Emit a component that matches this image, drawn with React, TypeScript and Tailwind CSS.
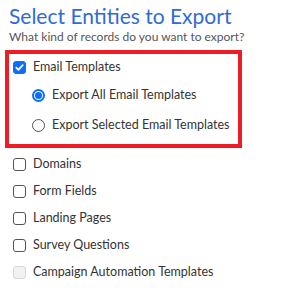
import React from 'react';

const font = { fontFamily: 'Lato, "Noto Sans", sans-serif' };

const Box = ({ checked = false, disabled = false }: { checked?: boolean; disabled?: boolean }) => (
  <span
    className={`flex h-[13px] w-[13px] shrink-0 items-center justify-center rounded-[3px] border ${
      checked
        ? 'border-[#0d6efd] bg-[#0d6efd]'
        : disabled
        ? 'border-[#d8d8d8] bg-[#f1f1f1]'
        : 'border-[#555] bg-white'
    }`}
  >
    {checked && (
      <svg viewBox="0 0 12 12" className="h-[11px] w-[11px]">
        <path d="M2.5 6.2l2.3 2.3 4.7-5" fill="none" stroke="white" strokeWidth="1.9" strokeLinecap="round" strokeLinejoin="round" />
      </svg>
    )}
  </span>
);

const Radio = ({ checked = false }: { checked?: boolean }) => (
  <span
    className={`flex h-[13px] w-[13px] shrink-0 items-center justify-center rounded-full border ${
      checked ? 'border-[#0d6efd] border-2' : 'border-[#555]'
    }`}
  >
    {checked && <span className="h-[7px] w-[7px] rounded-full bg-[#0d6efd]" />}
  </span>
);

const rows = [
  { label: 'Domains' },
  { label: 'Form Fields' },
  { label: 'Landing Pages' },
  { label: 'Survey Questions' },
  { label: 'Campaign Automation Templates', disabled: true },
];

export default function App() {
  return (
    <div className="h-[296px] w-[283px] whitespace-nowrap bg-white text-[12.5px] text-[#333]" style={font}>
      <div className="pl-[9px] pt-[2px]">
        <h1 className="text-[21px] leading-[27px] text-[#2e6bd6]">Select Entities to Export</h1>
        <p className="text-[12px] leading-[15px] text-[#555]">What kind of records do you want to export?</p>
      </div>
      <div className="ml-[5px] mt-[6px] w-[237px] border-4 border-[#ee1c25] pb-[5px]">
        <label className="flex h-[26px] items-center gap-[7px] pl-[4px]">
          <Box checked />
          <span>Email Templates</span>
        </label>
        <div className="flex flex-col pl-[23px]">
          <label className="flex h-[31px] items-center gap-[7px]">
            <Radio checked />
            <span>Export All Email Templates</span>
          </label>
          <label className="flex h-[28px] items-center gap-[7px]">
            <Radio />
            <span>Export Selected Email Templates</span>
          </label>
        </div>
      </div>
      <div className="flex flex-col pl-[13px] pt-[3px]">
        {rows.map((r) => (
          <label key={r.label} className="flex h-[27px] items-center gap-[7px]">
            <Box disabled={r.disabled} />
            <span>{r.label}</span>
          </label>
        ))}
      </div>
    </div>
  );
}
